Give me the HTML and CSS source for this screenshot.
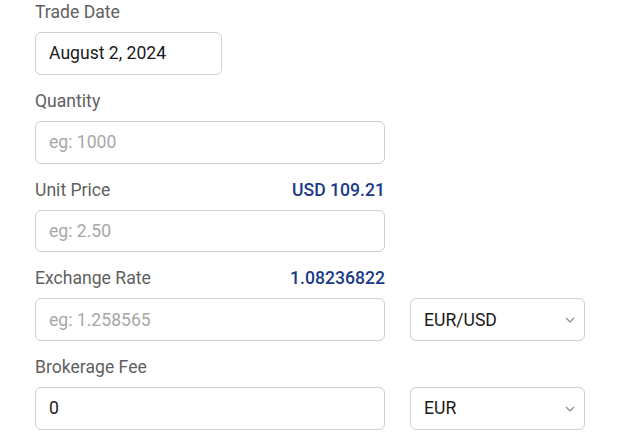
FILE: index.html
```html
<!DOCTYPE html>
<html>
<head>
<meta charset="utf-8">
<link rel="stylesheet" href="styles.css">
</head>
<body>
<form class="form">
  <div class="group">
    <div class="label-row"><label class="label">Trade Date</label></div>
    <div class="field-row">
      <input class="input input-date" type="text" value="August 2, 2024">
    </div>
  </div>
  <div class="group">
    <div class="label-row"><label class="label">Quantity</label></div>
    <div class="field-row">
      <input class="input input-wide" type="text" placeholder="eg: 1000">
    </div>
  </div>
  <div class="group">
    <div class="label-row"><label class="label">Unit Price</label><span class="value">USD 109.21</span></div>
    <div class="field-row">
      <input class="input input-wide" type="text" placeholder="eg: 2.50">
    </div>
  </div>
  <div class="group">
    <div class="label-row"><label class="label">Exchange Rate</label><span class="value">1.08236822</span></div>
    <div class="field-row">
      <input class="input input-wide" type="text" placeholder="eg: 1.258565">
      <div class="select-wrap">
        <select class="select"><option>EUR/USD</option></select>
        <svg class="chevron" width="10" height="6" viewBox="0 0 10 6"><path d="M1 1 L5 5 L9 1" fill="none" stroke="#8a8a8a" stroke-width="1.2"/></svg>
      </div>
    </div>
  </div>
  <div class="group">
    <div class="label-row"><label class="label">Brokerage Fee</label></div>
    <div class="field-row">
      <input class="input input-wide" type="text" value="0">
      <div class="select-wrap">
        <select class="select"><option>EUR</option></select>
        <svg class="chevron" width="10" height="6" viewBox="0 0 10 6"><path d="M1 1 L5 5 L9 1" fill="none" stroke="#8a8a8a" stroke-width="1.2"/></svg>
      </div>
    </div>
  </div>
</form>
</body>
</html>
```
FILE: styles.css
```css
html, body {
  margin: 0;
  padding: 0;
  background: #fff;
}
body {
  font-family: Roboto, "Liberation Sans", sans-serif;
}
.form {
  padding: 0 0 0 35px;
  display: flex;
  flex-direction: column;
  gap: 14px;
}
.group {
  display: flex;
  flex-direction: column;
  gap: 8px;
}
.label-row {
  width: 350px;
  height: 24px;
  display: flex;
  justify-content: space-between;
  align-items: center;
}
.label {
  font-size: 17.6px;
  line-height: 24px;
  color: #5f5f5f;
}
.value {
  font-size: 17.6px;
  line-height: 24px;
  font-weight: 500;
  color: #1c3a87;
}
.field-row {
  display: flex;
  gap: 25px;
}
.input {
  box-sizing: border-box;
  height: 42.75px;
  border: 1px solid #cfcfcf;
  border-radius: 6px;
  padding: 0 13px;
  font-family: Roboto, "Liberation Sans", sans-serif;
  font-size: 17.6px;
  color: #1a1a1a;
  background: #fff;
  outline: none;
}
.input::placeholder {
  color: #a8a8a8;
}
.input-date {
  width: 187px;
}
.input-wide {
  width: 350px;
}
.select-wrap {
  position: relative;
  width: 175px;
}
.select {
  box-sizing: border-box;
  width: 175px;
  height: 42.75px;
  border: 1px solid #cfcfcf;
  border-radius: 6px;
  padding: 0 13px;
  font-family: Roboto, "Liberation Sans", sans-serif;
  font-size: 17.6px;
  color: #1a1a1a;
  background: #fff;
  appearance: none;
  -webkit-appearance: none;
  outline: none;
}
.chevron {
  position: absolute;
  right: 10px;
  top: 19px;
  pointer-events: none;
}
```
